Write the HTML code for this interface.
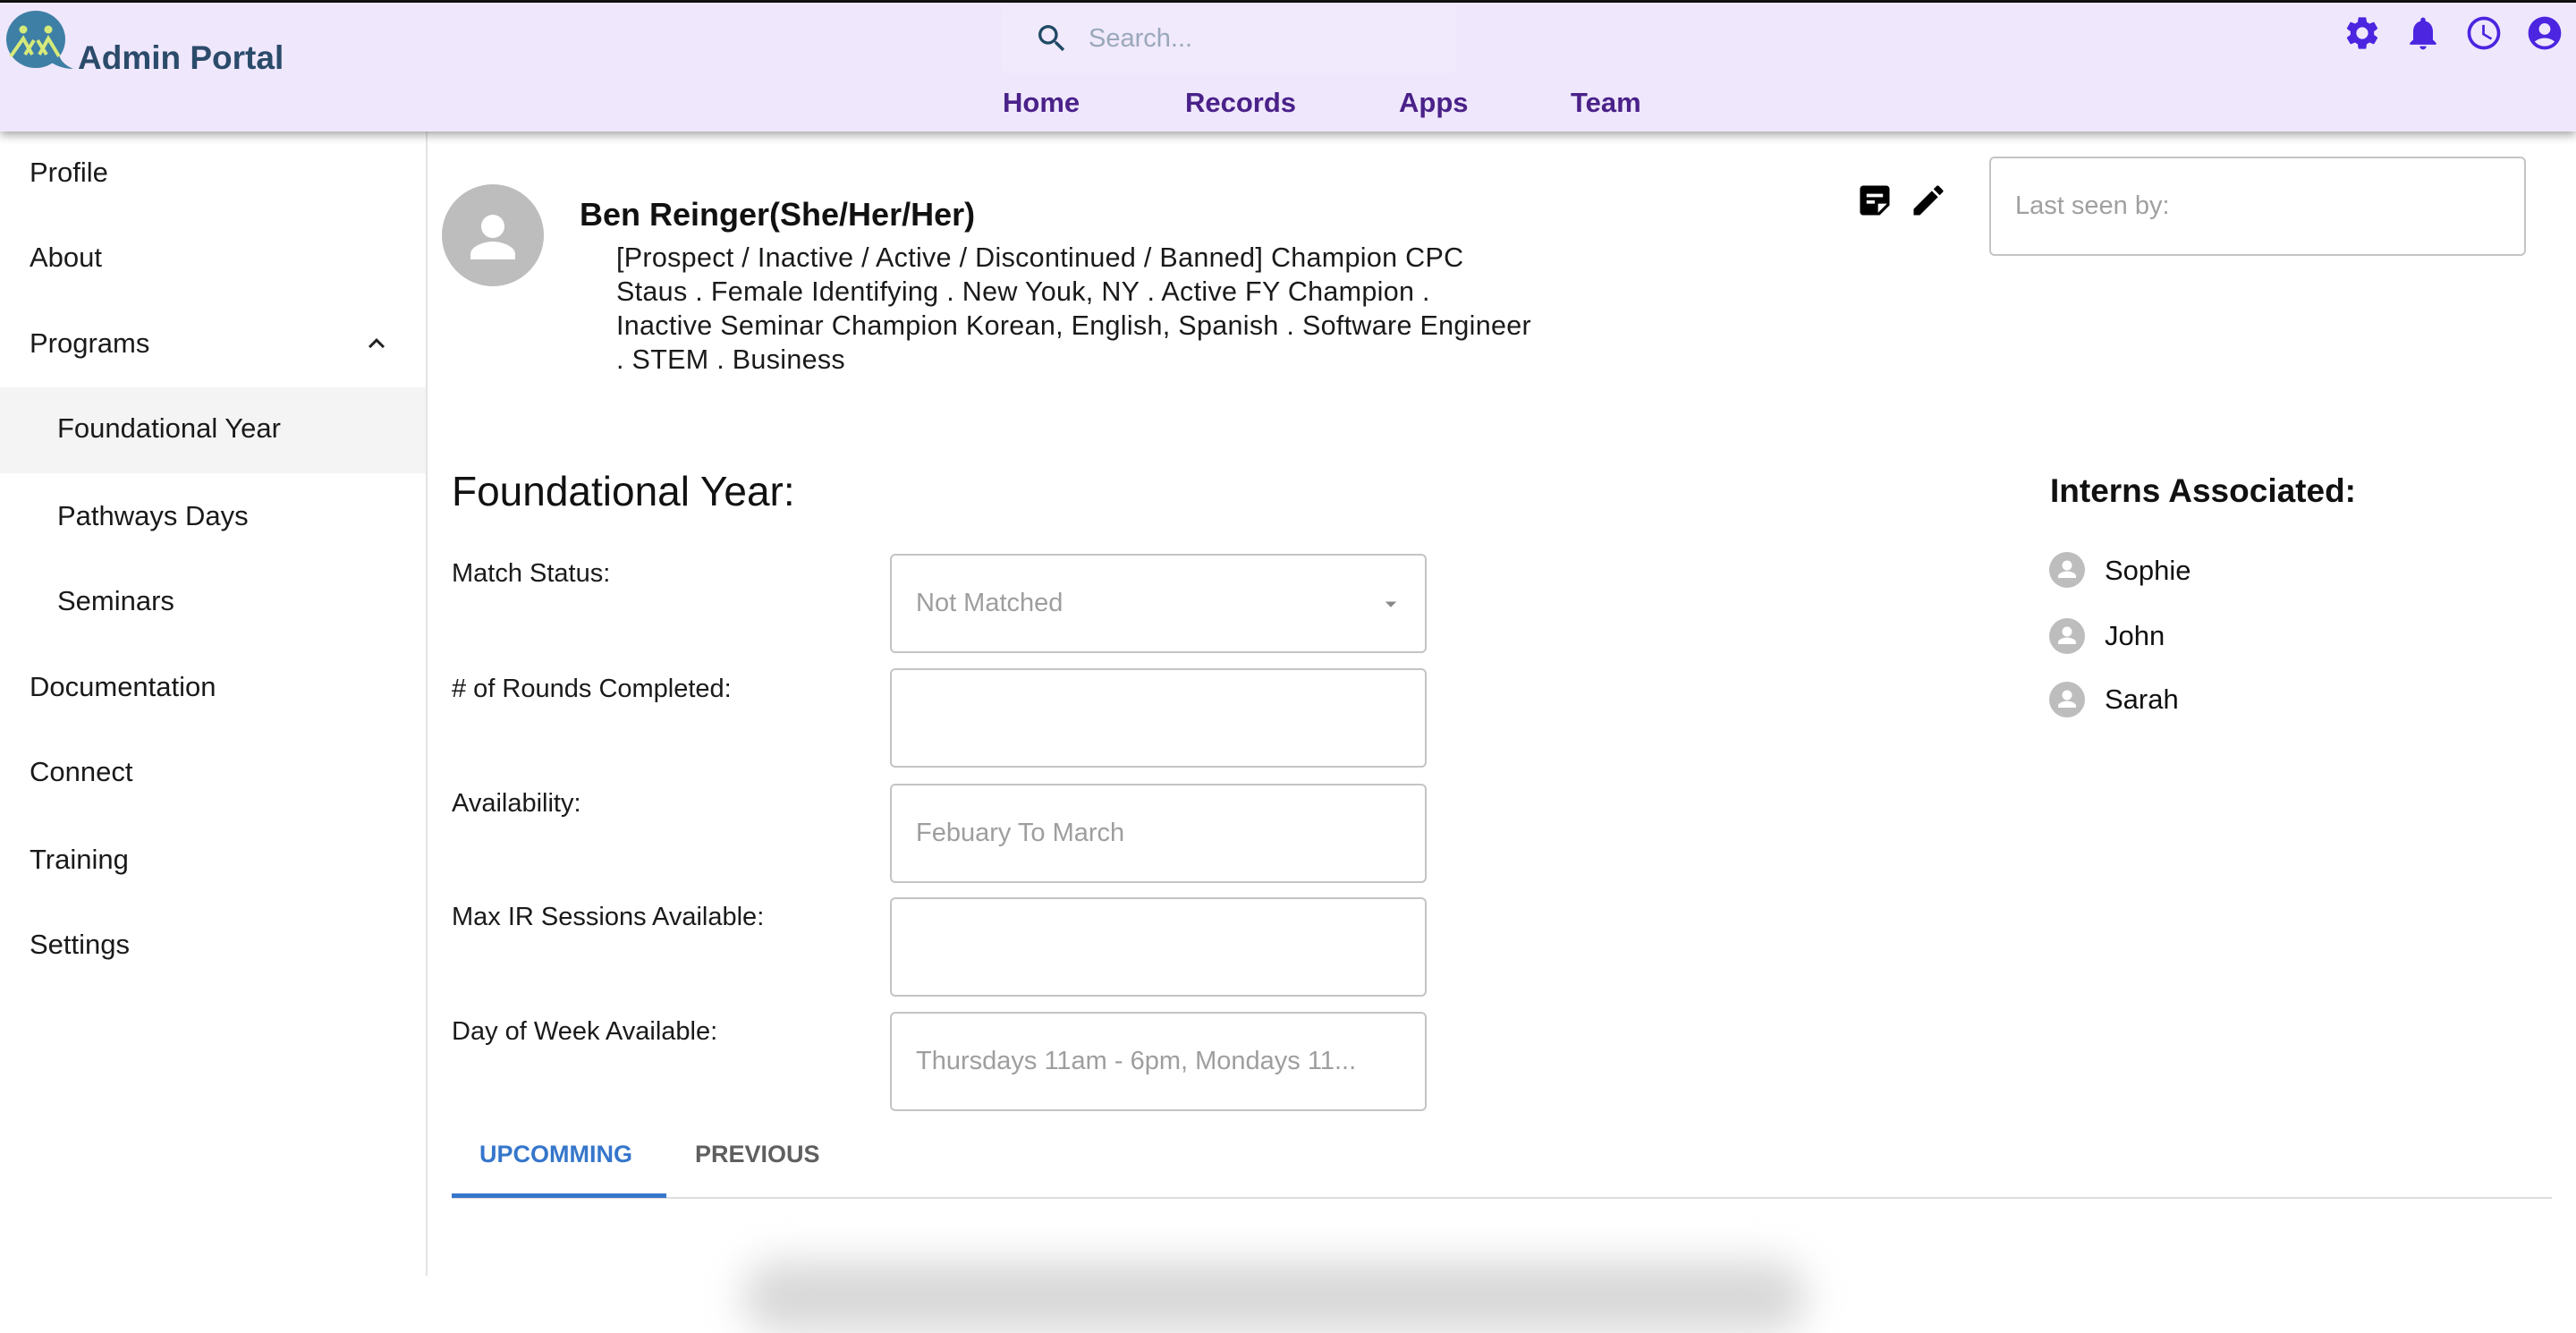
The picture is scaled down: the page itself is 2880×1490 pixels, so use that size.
<!DOCTYPE html>
<html><head><meta charset="utf-8"><style>
*{margin:0;padding:0;box-sizing:border-box}
body{width:2880px;height:1426px;overflow:hidden;background:#fff;font-family:"Liberation Sans",Arial,sans-serif;position:relative;color:#111}
.a{position:absolute;white-space:nowrap}
.hdr{position:absolute;left:0;top:0;width:2880px;height:147px;background:#efe7fc;border-top:3px solid #111;box-shadow:0 4px 10px rgba(0,0,0,.35);z-index:2}
.nav{font-weight:bold;font-size:31px;color:#4a2189;top:92px;line-height:40px}
.side{position:absolute;left:0;top:147px;width:478px;height:1279px;border-right:2px solid #e4e4e4}
.si{font-size:31px;left:33px;line-height:40px;color:#1a1a1a}
.sub{left:64px}
.lab{font-size:29px;left:505px;line-height:40px;color:#1a1a1a}
.inp{position:absolute;left:995px;width:600px;height:111px;border:2px solid #c4c4c4;border-radius:6px;font-size:29px;color:#9e9e9e;padding-left:27px;line-height:107px;white-space:nowrap;overflow:hidden}
.desc{font-size:30.5px;line-height:38px;color:#1a1a1a;left:689px;top:269px;letter-spacing:0.3px}
.ic{position:absolute}
</style></head><body>
<div class="hdr">
  <svg class="ic" style="left:6px;top:8px" width="76" height="70" viewBox="0 0 76 70">
    <ellipse cx="34" cy="33" rx="33" ry="32" fill="#3e7fa5"/>
    <path d="M50 58 Q62 66 76 66 Q62 60 60 50 Z" fill="#3e7fa5"/>
    <circle cx="20" cy="22" r="4.5" fill="#d6ea7a"/><circle cx="48" cy="22" r="4.5" fill="#d6ea7a"/>
    <path d="M6 52 L20 32 L30 50 M22 50 L32 34 M38 50 L48 32 L60 52 M46 50 L36 34" stroke="#d6ea7a" stroke-width="4" fill="none"/>
  </svg>
  <div class="a" style="left:87px;top:40px;font-size:37px;font-weight:bold;color:#2b4b6a;line-height:44px">Admin Portal</div>
  <div class="a" style="left:1120px;top:3px;width:508px;height:76px;background:#f1e9fc;border-radius:6px"></div>
  <svg class="ic" style="left:1156px;top:20px" width="40" height="40" viewBox="0 0 24 24"><path fill="#1f4a64" d="M15.5 14h-.79l-.28-.27A6.47 6.47 0 0 0 16 9.5 6.5 6.5 0 1 0 9.5 16c1.610 0 3.09-.59 4.23-1.57l.27.28v.79l5 4.99L20.49 19l-4.99-5zm-6 0C7.01 14 5 11.99 5 9.5S7.01 5 9.5 5 14 7.01 14 9.5 11.99 14 9.5 14z"/></svg>
  <div class="a" style="left:1217px;top:20px;font-size:29px;color:#9aa8bb;line-height:40px">Search...</div>
  <div class="a nav" style="left:1121px">Home</div>
  <div class="a nav" style="left:1325px">Records</div>
  <div class="a nav" style="left:1564px">Apps</div>
  <div class="a nav" style="left:1756px">Team</div>
  <svg class="ic" style="left:2619px;top:12px" width="44" height="44" viewBox="0 0 24 24"><path fill="#4b25e0" d="M19.14 12.94c.04-.3.06-.61.06-.94 0-.32-.02-.64-.07-.94l2.030-1.58a.49.49 0 0 0 .12-.61l-1.92-3.32a.488.488 0 0 0-.59-.22l-2.39.96c-.5-.38-1.03-.7-1.62-.94l-.36-2.54a.484.484 0 0 0-.48-.41h-3.84c-.24 0-.43.17-.47.41l-.36 2.54c-.59.24-1.13.57-1.62.94l-2.39-.96c-.22-.08-.47 0-.59.22L2.74 8.87c-.12.21-.08.47.12.61l2.03 1.58c-.05.3-.09.63-.09.94s.02.64.07.94l-2.03 1.58a.49.49 0 0 0-.12.61l1.92 3.32c.12.22.37.29.59.22l2.39-.96c.5.38 1.03.7 1.62.94l.36 2.54c.05.24.24.41.48.41h3.84c.24 0 .44-.17.47-.41l.36-2.54c.59-.24 1.13-.56 1.62-.94l2.39.96c.22.08.47 0 .59-.22l1.92-3.32c.12-.22.07-.47-.12-.61l-2.01-1.58zM12 15.6c-1.98 0-3.6-1.62-3.6-3.6s1.62-3.6 3.6-3.6 3.6 1.62 3.6 3.6-1.62 3.6-3.6 3.6z"/></svg>
  <svg class="ic" style="left:2687px;top:12px" width="44" height="44" viewBox="0 0 24 24"><path fill="#4b25e0" d="M12 22c1.1 0 2-.9 2-2h-4c0 1.1.89 2 2 2zm6-6v-5c0-3.070-1.64-5.64-4.5-6.32V4c0-.83-.67-1.5-1.5-1.5s-1.5.67-1.5 1.5v.68C7.63 5.36 6 7.92 6 11v5l-2 2v1h16v-1l-2-2z"/></svg>
  <svg class="ic" style="left:2755px;top:12px" width="44" height="44" viewBox="0 0 24 24"><path fill="#4b25e0" d="M11.99 2C6.47 2 2 6.48 2 12s4.47 10 9.99 10C17.52 22 22 17.52 22 12S17.52 2 11.99 2zM12 20c-4.42 0-8-3.58-8-8s3.58-8 8-8 8 3.58 8 8-3.58 8-8 8zm.5-13H11v6l5.25 3.15.75-1.23-4.5-2.67z"/></svg>
  <svg class="ic" style="left:2823px;top:12px" width="44" height="44" viewBox="0 0 24 24"><path fill="#4b25e0" d="M12 2C6.48 2 2 6.48 2 12s4.48 10 10 10 10-4.48 10-10S17.52 2 12 2zm0 4c1.93 0 3.5 1.57 3.5 3.5S13.93 13 12 13s-3.5-1.57-3.5-3.5S10.07 6 12 6zm0 14c-2.03 0-4.43-.82-6.14-2.88a9.947 9.947 0 0 1 12.28 0C16.43 19.18 14.03 20 12 20z"/></svg>
</div>

<div class="side">
  <div class="a" style="left:0;top:286px;width:476px;height:96px;background:#f4f4f4"></div>
</div>
<div class="a si" style="top:173px">Profile</div>
<div class="a si" style="top:268px">About</div>
<div class="a si" style="top:364px">Programs</div>
<svg class="ic" style="left:403px;top:366px" width="36" height="36" viewBox="0 0 24 24"><path fill="#222" d="M7.41 15.41 12 10.830l4.59 4.58L18 14l-6-6-6 6z"/></svg>
<div class="a si sub" style="top:459px">Foundational Year</div>
<div class="a si sub" style="top:557px">Pathways Days</div>
<div class="a si sub" style="top:652px">Seminars</div>
<div class="a si" style="top:748px">Documentation</div>
<div class="a si" style="top:843px">Connect</div>
<div class="a si" style="top:941px">Training</div>
<div class="a si" style="top:1036px">Settings</div>

<svg class="ic" style="left:494px;top:206px" width="114" height="114" viewBox="0 0 114 114"><circle cx="57" cy="57" r="57" fill="#bdbdbd"/><circle cx="57" cy="47" r="13" fill="#fff"/><path d="M32 84v-6c0-9 16-14 25-14s25 5 25 14v6z" fill="#fff"/></svg>
<div class="a" style="left:648px;top:218px;font-size:36px;font-weight:bold;line-height:44px;color:#111">Ben Reinger(She/Her/Her)</div>
<div class="a desc">[Prospect / Inactive / Active / Discontinued / Banned] Champion CPC<br>Staus . Female Identifying . New Youk, NY . Active FY Champion .<br>Inactive Seminar Champion Korean, English, Spanish . Software Engineer<br>. STEM . Business</div>

<svg class="ic" style="left:2074px;top:202px" width="44" height="44" viewBox="0 0 24 24"><path fill="#000" d="M19 3H5c-1.1 0-2 .9-2 2v14c0 1.1.9 2 2 2h10l6-6V5c0-1.1-.9-2-2-2zM7 8h10v2H7V8zm5 6H7v-2h5v2zm2 5.5V14h5.5L14 19.5z"/></svg>
<svg class="ic" style="left:2134px;top:202px" width="44" height="44" viewBox="0 0 24 24"><path fill="#000" d="M3 17.25V21h3.75L17.81 9.94l-3.75-3.75L3 17.25zM20.71 7.04a.996.996 0 0 0 0-1.41l-2.34-2.34a.996.996 0 0 0-1.41 0l-1.83 1.83 3.75 3.75 1.83-1.83z"/></svg>
<div class="inp" style="left:2224px;top:175px;width:600px;height:111px;color:#a0a0a0;padding-left:27px">Last seen by:</div>

<div class="a" style="left:505px;top:522px;font-size:46px;line-height:54px;color:#111">Foundational Year:</div>
<div class="a" style="left:2292px;top:527px;font-size:37px;font-weight:bold;line-height:44px;color:#111">Interns Associated:</div>

<svg class="ic" style="left:2291px;top:617px" width="40" height="40" viewBox="0 0 40 40"><circle cx="20" cy="20" r="20" fill="#bdbdbd"/><circle cx="20" cy="15" r="5.5" fill="#fff"/><path d="M10 29v-2c0-3.5 6.5-5.5 10-5.5s10 2 10 5.5v2z" fill="#fff"/></svg>
<svg class="ic" style="left:2291px;top:691px" width="40" height="40" viewBox="0 0 40 40"><circle cx="20" cy="20" r="20" fill="#bdbdbd"/><circle cx="20" cy="15" r="5.5" fill="#fff"/><path d="M10 29v-2c0-3.5 6.5-5.5 10-5.5s10 2 10 5.5v2z" fill="#fff"/></svg>
<svg class="ic" style="left:2291px;top:762px" width="40" height="40" viewBox="0 0 40 40"><circle cx="20" cy="20" r="20" fill="#bdbdbd"/><circle cx="20" cy="15" r="5.5" fill="#fff"/><path d="M10 29v-2c0-3.5 6.5-5.5 10-5.5s10 2 10 5.5v2z" fill="#fff"/></svg>
<div class="a" style="left:2353px;top:618px;font-size:31px;line-height:40px">Sophie</div>
<div class="a" style="left:2353px;top:691px;font-size:31px;line-height:40px">John</div>
<div class="a" style="left:2353px;top:762px;font-size:31px;line-height:40px">Sarah</div>

<div class="a lab" style="top:621px">Match Status:</div>
<div class="a lab" style="top:750px"># of Rounds Completed:</div>
<div class="a lab" style="top:878px">Availability:</div>
<div class="a lab" style="top:1005px">Max IR Sessions Available:</div>
<div class="a lab" style="top:1133px">Day of Week Available:</div>

<div class="inp" style="top:619px">Not Matched</div>
<svg class="ic" style="left:1540px;top:660px" width="30" height="30" viewBox="0 0 24 24"><path fill="#888" d="M7 10l5 5 5-5z"/></svg>
<div class="inp" style="top:747px"></div>
<div class="inp" style="top:876px">Febuary To March</div>
<div class="inp" style="top:1003px"></div>
<div class="inp" style="top:1131px">Thursdays 11am - 6pm, Mondays 11...</div>

<div class="a" style="left:536px;top:1274px;font-size:27px;font-weight:bold;color:#3576cb;line-height:32px">UPCOMMING</div>
<div class="a" style="left:777px;top:1274px;font-size:27px;font-weight:bold;color:#5f5f5f;line-height:32px">PREVIOUS</div>
<div class="a" style="left:505px;top:1338px;width:2348px;height:2px;background:#dedede"></div>
<div class="a" style="left:505px;top:1334px;width:240px;height:5px;background:#3576cb"></div>
<div class="a" style="left:830px;top:1410px;width:1190px;height:80px;border-radius:40px;background:#d8d8d8;filter:blur(22px)"></div>
</body></html>
